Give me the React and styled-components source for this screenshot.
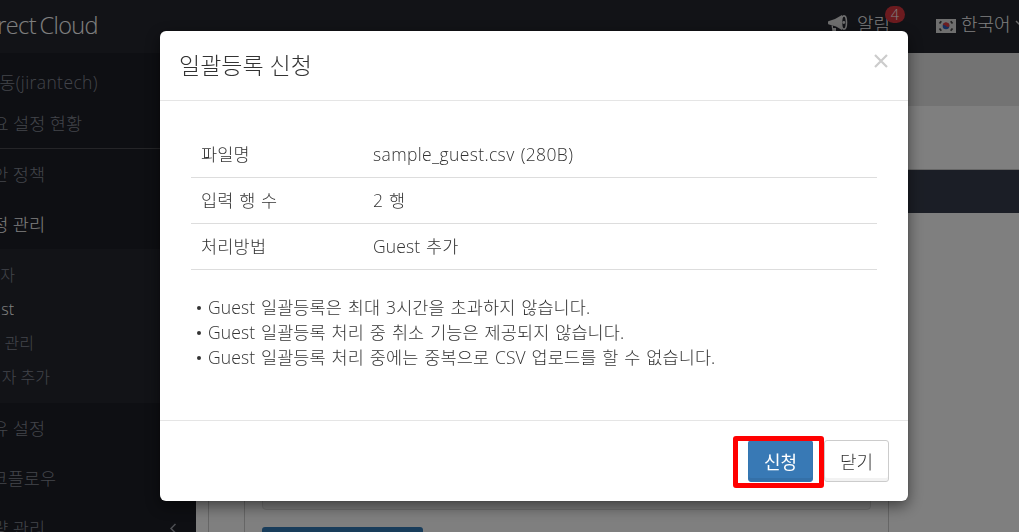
import styled, { createGlobalStyle } from "styled-components"

const GlobalStyle = createGlobalStyle`
  * {
    box-sizing: border-box;
  }
  body {
    margin: 0;
    background: #fff;
    overflow: hidden;
    font-family: "Open Sans", "Noto Sans CJK KR", sans-serif;
    font-weight: 300;
    color: #333;
  }
`

const Page = styled.div`
  display: flex;
  flex-direction: column;
  height: 532px;
  overflow: hidden;
`

const Header = styled.header`
  flex: none;
  display: flex;
  justify-content: space-between;
  height: 53px;
  background: #24262e;
  color: #fff;
`

const Brand = styled.div`
  display: flex;
  justify-content: flex-end;
  width: 98px;
  overflow: hidden;
  font-size: 23.5px;
  line-height: 50px;
  letter-spacing: -0.6px;
  word-spacing: -2px;
  white-space: nowrap;
`

const HeaderMenu = styled.div`
  display: flex;
  width: 192px;
  font-size: 18px;
  line-height: 48px;
  white-space: nowrap;
  overflow: hidden;
  svg {
    flex: none;
  }
`

const Notice = styled.div`
  position: relative;
  flex: none;
  display: flex;
  width: 109px;
  .horn {
    margin: 15px 9px 0 1px;
  }
`

const Badge = styled.span`
  position: absolute;
  left: 58px;
  top: 6px;
  width: 20px;
  height: 17px;
  border-radius: 9px;
  background: #d9363e;
  font-size: 14.5px;
  line-height: 17px;
  text-align: center;
`

const Language = styled.div`
  flex: none;
  display: flex;
  .flag {
    margin: 19px 5px 0 0;
  }
  .caret {
    margin: 20px 0 0 4px;
  }
`

const Body = styled.div`
  flex: 1;
  display: flex;
  min-height: 0;
`

const Sidebar = styled.nav`
  flex: none;
  width: 196px;
  background: #1c1e26;
  overflow: hidden;
`

const Profile = styled.div`
  height: 96px;
  padding-top: 9px;
  border-bottom: 1px solid #4a4b50;
`

const MenuItem = styled.div`
  display: flex;
  justify-content: space-between;
  height: ${({ $h }) => $h || 50}px;
  line-height: ${({ $h }) => $h || 50}px;
  font-size: ${({ $size }) => $size || 17.5}px;
  letter-spacing: ${({ $spacing }) => $spacing || 0}px;
  color: ${({ $active }) => ($active ? "#fff" : "#858995")};
  .label {
    display: flex;
    justify-content: flex-end;
    width: ${({ $end }) => $end}px;
    overflow: hidden;
    white-space: nowrap;
  }
  svg {
    margin: 20px 19px 0 0;
  }
`

const SubMenu = styled.div`
  height: 154px;
  padding-top: 9px;
  background: #24262e;
`

const Main = styled.main`
  flex: 1;
  display: flex;
  flex-direction: column;
`

const Crumbs = styled.div`
  flex: none;
  height: 53px;
  background: #e6e6e6;
`

const Title = styled.div`
  flex: none;
  height: 64px;
  border-bottom: 1px solid #ccc;
`

const TabBar = styled.div`
  flex: none;
  height: 43px;
  background: #373d4c;
`

const Content = styled.div`
  flex: 1;
  margin-left: 12px;
  border-left: 1px solid #ccc;
`

const Panel = styled.div`
  width: 645px;
  height: 100%;
  margin-left: 35px;
  padding: 0 17px;
  border: solid #ccc;
  border-width: 0 1px;
`

const Well = styled.div`
  height: 297px;
  margin-bottom: 17px;
  background: #f5f5f5;
  border: 1px solid #ddd;
  border-radius: 4px;
`

const PanelButton = styled.div`
  width: 161px;
  height: 40px;
  border-radius: 3px;
  background: #337ab7;
`

const Backdrop = styled.div`
  position: fixed;
  inset: 0;
  background: rgba(0, 0, 0, 0.5);
`

const Dialog = styled.div`
  position: fixed;
  left: 160px;
  top: 31px;
  width: 748px;
  height: 470px;
  display: flex;
  flex-direction: column;
  background: #fff;
  border-radius: 6px;
  box-shadow: 0 5px 15px rgba(0, 0, 0, 0.5), 0 0 1px rgba(0, 0, 0, 0.6);
`

const DialogHeader = styled.div`
  display: flex;
  justify-content: space-between;
  height: 70px;
  padding: 0 20px 0 19px;
  border-bottom: 1px solid #e5e5e5;
  h4 {
    margin: 0;
    font-size: 23px;
    font-weight: 300;
    line-height: 68px;
  }
  svg {
    margin-top: 23px;
  }
`

const DialogBody = styled.div`
  flex: 1;
  padding: 31px 31px 0;
  font-size: 17.5px;
  letter-spacing: 0.1px;
  word-spacing: 1.2px;
`

const InfoRow = styled.dl`
  display: flex;
  height: 46px;
  margin: 0;
  padding-left: 10px;
  line-height: 44px;
  border-bottom: 1px solid #ddd;
  dt {
    width: 172px;
    letter-spacing: 0.2px;
    word-spacing: 0.8px;
  }
  dd {
    margin: 0;
    letter-spacing: ${({ $spacing }) => $spacing || 0.1}px;
  }
`

const Notes = styled.ul`
  margin: 25px 0 0;
  padding: 0 0 0 6px;
  list-style: none;
  line-height: 25px;
  li {
    display: flex;
    align-items: center;
    white-space: nowrap;
  }
  li::before {
    content: "";
    width: 4px;
    height: 4px;
    margin-right: 7px;
    border-radius: 50%;
    background: #333;
  }
`

const DialogFooter = styled.div`
  display: flex;
  justify-content: flex-end;
  gap: 11px;
  height: 81px;
  padding: 19px 19px 0;
  border-top: 1px solid #e5e5e5;
`

const Button = styled.button`
  position: relative;
  width: 65px;
  height: 42px;
  padding: 0 0 1px;
  border: 1px solid ${({ $primary }) => ($primary ? "#3276b1" : "#ccc")};
  border-radius: 3px;
  background: ${({ $primary }) => ($primary ? "#3879b5" : "#fff")};
  box-shadow: inset 0 -3px 0 ${({ $primary }) => ($primary ? "rgba(0, 0, 0, 0.07)" : "#f2f2f2")};
  color: ${({ $primary }) => ($primary ? "#fff" : "#333")};
  font: inherit;
  font-size: 18px;
  font-weight: ${({ $primary }) => ($primary ? 400 : 300)};
`

const Highlight = styled.span`
  position: absolute;
  left: -16px;
  top: -5px;
  width: 91px;
  height: 52px;
  border: 5px solid #f00;
  border-radius: 3px;
`

const Horn = () => (
  <svg className='horn' width='20' height='18' viewBox='0 0 20 18'>
    <path d='M14 0v15L8 11.500 1 9.500a1 1 0 0 1-1-1V7a1 1 0 0 1 1-1l6-2z' fill='#ddd' />
    <path d='M3.500 10.500h1.500v2.500h3v4h-3.500z' fill='#ddd' />
    <ellipse cx='16' cy='7.500' rx='2.500' ry='6.600' fill='#24262e' stroke='#ddd' strokeWidth='1.600' />
    <circle cx='15.800' cy='7.500' r='1.400' fill='#ddd' />
  </svg>
)

const Flag = () => (
  <svg className='flag' width='20' height='14' viewBox='0 0 20 14'>
    <rect width='20' height='14' fill='#dedede' />
    <circle cx='10' cy='7' r='3.300' fill='#2c5cb8' />
    <path d='M6.800 6A3.300 3.300 0 0 1 13.300 7.500Q11.500 8.500 10 7T6.800 6z' fill='#dc3a40' />
    <g stroke='#444' strokeWidth='1.800'>
      <path d='M3.500 4.500L5.300 2.300M14.700 2.300l1.800 2.200M3.500 9.500l1.800 2.200M14.700 11.700l1.800-2.200' />
    </g>
  </svg>
)

const rows = [
  { label: "파일명", value: "sample_guest.csv (280B)", spacing: 0.36 },
  { label: "입력 행 수", value: "2 행" },
  { label: "처리방법", value: "Guest 추가" },
]

const notes = [
  "Guest 일괄등록은 최대 3시간을 초과하지 않습니다.",
  "Guest 일괄등록 처리 중 취소 기능은 제공되지 않습니다.",
  "Guest 일괄등록 처리 중에는 중복으로 CSV 업로드를 할 수 없습니다.",
]

const subMenu = [
  { label: "자", end: 15 },
  { label: "st", end: 14, active: true },
  { label: "관리", end: 34 },
  { label: "자 추가", end: 50 },
]

const App = () => (
  <>
    <GlobalStyle />
    <Page>
      <Header>
        <Brand>
          <span>rect Cloud</span>
        </Brand>
        <HeaderMenu>
          <Notice>
            <Horn />
            <span>알림</span>
            <Badge>4</Badge>
          </Notice>
          <Language>
            <Flag />
            <span>한국어</span>
            <svg className='caret' width='10' height='7' viewBox='0 0 10 7'>
              <path d='M1 1l4 4 4-4' fill='none' stroke='#ccc' strokeWidth='1.500' />
            </svg>
          </Language>
        </HeaderMenu>
      </Header>
      <Body>
        <Sidebar>
          <Profile>
            <MenuItem $h={41} $end={98} $spacing={0.4}>
              <span className='label'>동(jirantech)</span>
            </MenuItem>
            <MenuItem $h={41} $end={82}>
              <span className='label'>요 설정 현황</span>
            </MenuItem>
          </Profile>
          <MenuItem $end={45}>
            <span className='label'>안 정책</span>
          </MenuItem>
          <MenuItem $end={45} $active>
            <span className='label'>정 관리</span>
          </MenuItem>
          <SubMenu>
            {subMenu.map(({ label, end, active }) => (
              <MenuItem key={label} $h={34} $size={16} $end={end} $active={active}>
                <span className='label'>{label}</span>
              </MenuItem>
            ))}
          </SubMenu>
          <MenuItem $end={45}>
            <span className='label'>유 설정</span>
          </MenuItem>
          <MenuItem $end={56}>
            <span className='label'>크플로우</span>
          </MenuItem>
          <MenuItem $end={45}>
            <span className='label'>량 관리</span>
            <svg width='8' height='12' viewBox='0 0 8 12'>
              <path d='M6.500 1L2 5.500l4.500 4.500' fill='none' stroke='#999ca5' strokeWidth='1.500' />
            </svg>
          </MenuItem>
        </Sidebar>
        <Main>
          <Crumbs />
          <Title />
          <TabBar />
          <Content>
            <Panel>
              <Well />
              <PanelButton />
            </Panel>
          </Content>
        </Main>
      </Body>
    </Page>
    <Backdrop />
    <Dialog role='dialog'>
      <DialogHeader>
        <h4>일괄등록 신청</h4>
        <svg width='14' height='14' viewBox='0 0 14 14'>
          <path d='M1 1l12 12M13 1L1 13' stroke='#ccc' strokeWidth='2.200' />
        </svg>
      </DialogHeader>
      <DialogBody>
        {rows.map(({ label, value, spacing }) => (
          <InfoRow key={label} $spacing={spacing}>
            <dt>{label}</dt>
            <dd>{value}</dd>
          </InfoRow>
        ))}
        <Notes>
          {notes.map((note) => (
            <li key={note}>{note}</li>
          ))}
        </Notes>
      </DialogBody>
      <DialogFooter>
        <Button $primary>
          신청
          <Highlight />
        </Button>
        <Button>닫기</Button>
      </DialogFooter>
    </Dialog>
  </>
)

export default App
